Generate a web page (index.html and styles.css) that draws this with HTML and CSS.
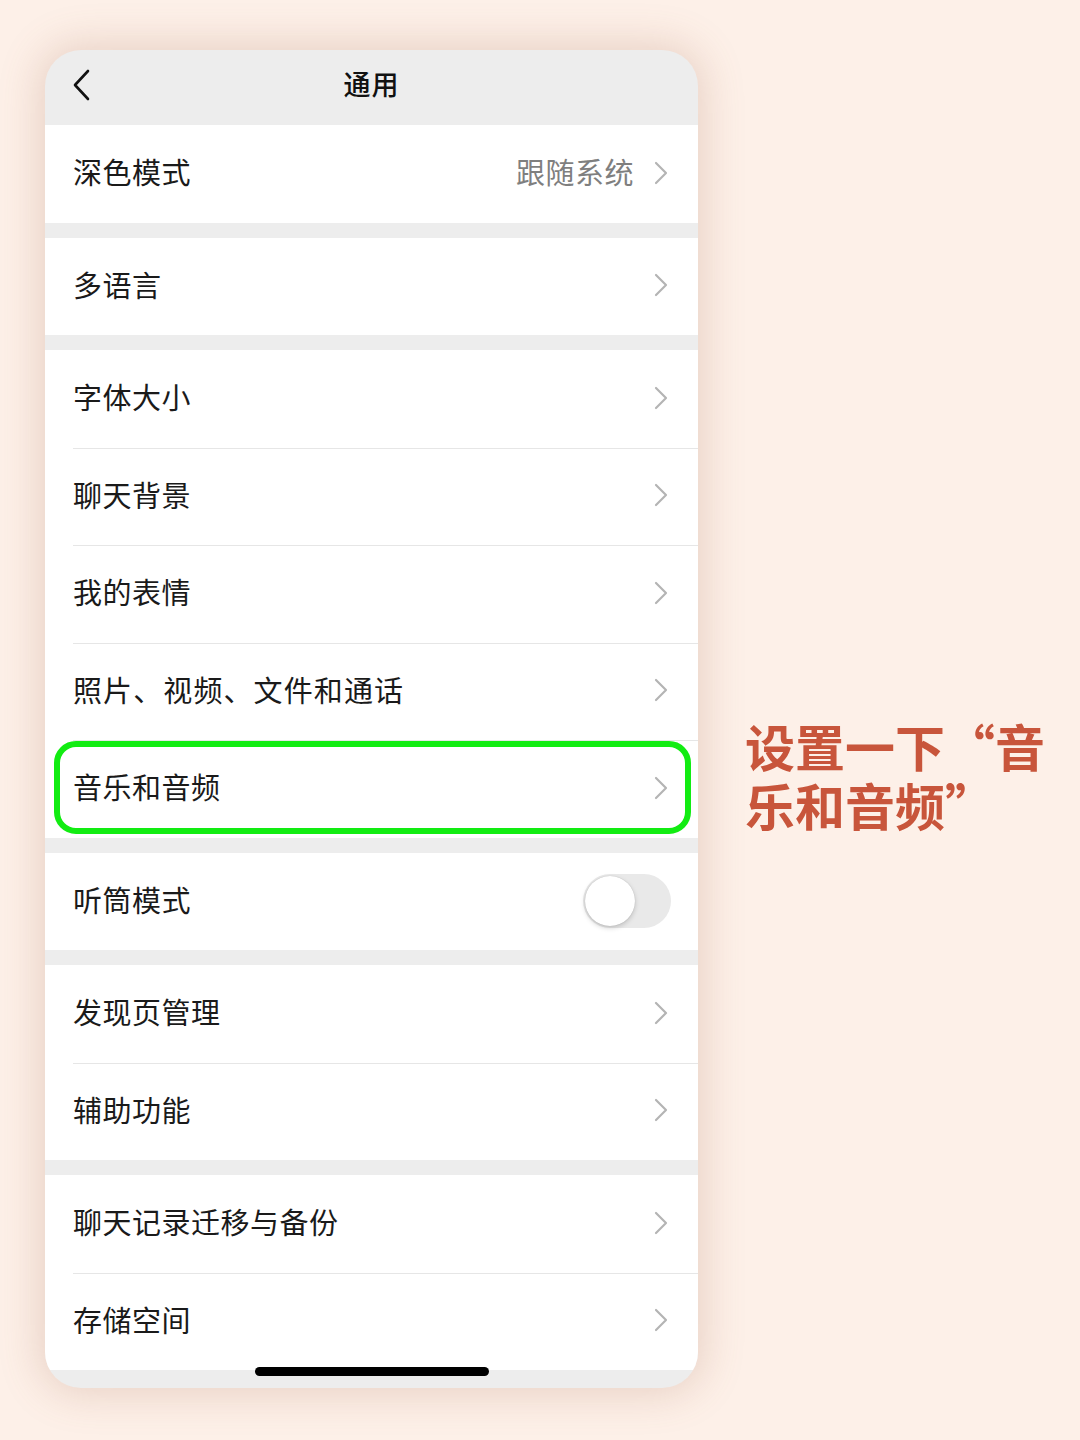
FILE: index.html
```html
<!DOCTYPE html>
<html lang="zh-CN">
<head>
<meta charset="utf-8">
<link rel="stylesheet" href="styles.css">
</head>
<body>
<div class="page">
  <div class="phone">
    <div class="nav">
      <svg class="back" width="20" height="32" viewBox="0 0 20 32"><path d="M16 2 L3 16 L16 30" fill="none" stroke="#111" stroke-width="2.6" stroke-linecap="round" stroke-linejoin="round"/></svg>
      <div class="title">通用</div>
    </div>

    <div class="group">
      <div class="row"><span class="label">深色模式</span><span class="value">跟随系统</span><svg class="chev" width="14" height="24" viewBox="0 0 14 24"><path d="M2 2 L12 12 L2 22" fill="none" stroke="#b4b4b4" stroke-width="2.2" stroke-linecap="round" stroke-linejoin="round"/></svg></div>
    </div>

    <div class="group">
      <div class="row"><span class="label">多语言</span><svg class="chev" width="14" height="24" viewBox="0 0 14 24"><path d="M2 2 L12 12 L2 22" fill="none" stroke="#b4b4b4" stroke-width="2.2" stroke-linecap="round" stroke-linejoin="round"/></svg></div>
    </div>

    <div class="group">
      <div class="row"><span class="label">字体大小</span><svg class="chev" width="14" height="24" viewBox="0 0 14 24"><path d="M2 2 L12 12 L2 22" fill="none" stroke="#b4b4b4" stroke-width="2.2" stroke-linecap="round" stroke-linejoin="round"/></svg></div>
      <div class="row"><span class="label">聊天背景</span><svg class="chev" width="14" height="24" viewBox="0 0 14 24"><path d="M2 2 L12 12 L2 22" fill="none" stroke="#b4b4b4" stroke-width="2.2" stroke-linecap="round" stroke-linejoin="round"/></svg></div>
      <div class="row"><span class="label">我的表情</span><svg class="chev" width="14" height="24" viewBox="0 0 14 24"><path d="M2 2 L12 12 L2 22" fill="none" stroke="#b4b4b4" stroke-width="2.2" stroke-linecap="round" stroke-linejoin="round"/></svg></div>
      <div class="row"><span class="label wide">照片、视频、文件和通话</span><svg class="chev" width="14" height="24" viewBox="0 0 14 24"><path d="M2 2 L12 12 L2 22" fill="none" stroke="#b4b4b4" stroke-width="2.2" stroke-linecap="round" stroke-linejoin="round"/></svg></div>
      <div class="row highlight"><span class="label">音乐和音频</span><svg class="chev" width="14" height="24" viewBox="0 0 14 24"><path d="M2 2 L12 12 L2 22" fill="none" stroke="#b4b4b4" stroke-width="2.2" stroke-linecap="round" stroke-linejoin="round"/></svg></div>
    </div>

    <div class="group">
      <div class="row"><span class="label">听筒模式</span><span class="toggle"><span class="knob"></span></span></div>
    </div>

    <div class="group">
      <div class="row"><span class="label">发现页管理</span><svg class="chev" width="14" height="24" viewBox="0 0 14 24"><path d="M2 2 L12 12 L2 22" fill="none" stroke="#b4b4b4" stroke-width="2.2" stroke-linecap="round" stroke-linejoin="round"/></svg></div>
      <div class="row"><span class="label">辅助功能</span><svg class="chev" width="14" height="24" viewBox="0 0 14 24"><path d="M2 2 L12 12 L2 22" fill="none" stroke="#b4b4b4" stroke-width="2.2" stroke-linecap="round" stroke-linejoin="round"/></svg></div>
    </div>

    <div class="group">
      <div class="row"><span class="label">聊天记录迁移与备份</span><svg class="chev" width="14" height="24" viewBox="0 0 14 24"><path d="M2 2 L12 12 L2 22" fill="none" stroke="#b4b4b4" stroke-width="2.2" stroke-linecap="round" stroke-linejoin="round"/></svg></div>
      <div class="row"><span class="label">存储空间</span><svg class="chev" width="14" height="24" viewBox="0 0 14 24"><path d="M2 2 L12 12 L2 22" fill="none" stroke="#b4b4b4" stroke-width="2.2" stroke-linecap="round" stroke-linejoin="round"/></svg></div>
    </div>

    <div class="bottom"></div>
    <div class="home-bar"></div>
  </div>

  <div class="note">
    <div class="note-line">设置一下“音</div>
    <div class="note-line">乐和音频”</div>
  </div>
</div>
</body>
</html>
```

FILE: styles.css
```css
* { box-sizing: border-box; }

html, body {
  margin: 0;
  padding: 0;
}

body {
  width: 1080px;
  height: 1440px;
  background: #fdf0e8;
  font-family: "Noto Sans CJK SC", "Noto Sans", sans-serif;
  overflow: hidden;
}

.page {
  display: flex;
  align-items: flex-start;
  padding: 50px 0 0 45px;
}

.phone {
  position: relative;
  width: 653px;
  height: 1338px;
  background: #ededed;
  border-radius: 36px;
  overflow: hidden;
  box-shadow: 0 0 40px 6px rgba(160, 100, 75, 0.22);
  display: flex;
  flex-direction: column;
  gap: 15px;
}

.nav {
  position: relative;
  height: 75px;
  margin-bottom: -15px;
  display: flex;
  align-items: center;
  justify-content: center;
}

.back {
  position: absolute;
  left: 27px;
  top: 19px;
}

.title {
  font-size: 27px;
  font-weight: 500;
  color: #111;
  letter-spacing: 1px;
  padding-bottom: 8px;
}

.group {
  background: #fff;
  display: flex;
  flex-direction: column;
}

.row {
  position: relative;
  height: 97.5px;
  display: flex;
  align-items: center;
  padding: 0 30px 0 28px;
}

.row + .row::before {
  content: "";
  position: absolute;
  left: 28px;
  right: 0;
  top: 0;
  height: 1px;
  background: #e6e6e6;
}

.label {
  flex: 1;
  font-size: 29px;
  color: #1a1a1a;
  letter-spacing: 0.5px;
  padding-bottom: 5px;
}

.label.wide {
  letter-spacing: 1.1px;
}

.value {
  font-size: 29px;
  color: #7f7f7f;
  margin-right: 20px;
  letter-spacing: 0.5px;
  padding-bottom: 5px;
}

.chev {
  flex: none;
  margin-bottom: 2px;
}

.highlight::after {
  content: "";
  position: absolute;
  left: 9px;
  right: 7px;
  top: 1px;
  bottom: 4px;
  border: 6px solid #12ec12;
  border-radius: 22px;
}

.toggle {
  position: relative;
  width: 88px;
  height: 54px;
  border-radius: 27px;
  background: #e9e9e9;
  margin-right: -3px;
}

.knob {
  position: absolute;
  left: 2px;
  top: 2px;
  width: 50px;
  height: 50px;
  border-radius: 50%;
  background: #fff;
  box-shadow: 0 2px 5px rgba(0, 0, 0, 0.18), 0 0 1px rgba(0, 0, 0, 0.2);
}

.bottom {
  flex: 1;
}

.home-bar {
  position: absolute;
  left: 210px;
  bottom: 12px;
  width: 234px;
  height: 9px;
  border-radius: 5px;
  background: #000;
}

.note {
  margin: 666px 0 0 47px;
  display: flex;
  flex-direction: column;
}

.note-line {
  font-size: 50px;
  line-height: 59px;
  height: 59px;
  font-weight: 700;
  color: #c8553b;
  white-space: nowrap;
}
```
